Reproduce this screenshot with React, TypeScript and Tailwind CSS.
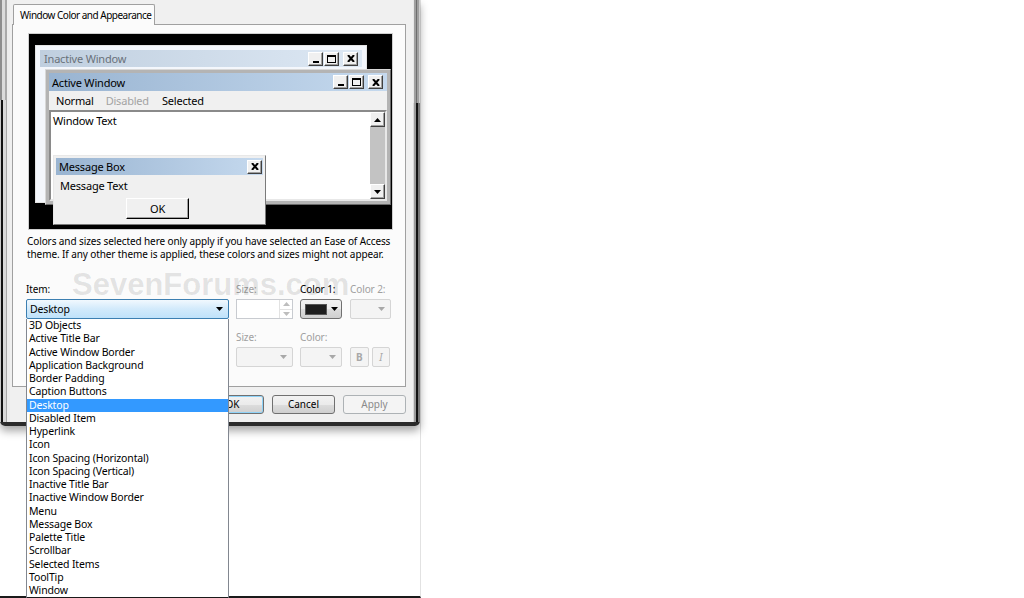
import React from "react";

const listItems = [
  "3D Objects",
  "Active Title Bar",
  "Active Window Border",
  "Application Background",
  "Border Padding",
  "Caption Buttons",
  "Desktop",
  "Disabled Item",
  "Hyperlink",
  "Icon",
  "Icon Spacing (Horizontal)",
  "Icon Spacing (Vertical)",
  "Inactive Title Bar",
  "Inactive Window Border",
  "Menu",
  "Message Box",
  "Palette Title",
  "Scrollbar",
  "Selected Items",
  "ToolTip",
  "Window",
];

const raised =
  "bg-[#f0f0f0] border border-t-white border-l-white border-r-[#404040] border-b-[#404040] shadow-[inset_-1px_-1px_#a0a0a0]";

const MinGlyph = () => (
  <svg width="8" height="8" viewBox="0 0 8 8">
    <rect x="1" y="6" width="6" height="2" fill="#000" />
  </svg>
);

const MaxGlyph = () => (
  <svg width="9" height="8" viewBox="0 0 9 8">
    <rect x="0.5" y="0.5" width="8" height="7" fill="none" stroke="#000" />
    <rect x="0" y="0" width="9" height="2" fill="#000" />
  </svg>
);

const CloseGlyph = () => (
  <svg width="8" height="7" viewBox="0 0 8 7">
    <path d="M1 0 L7 7 M7 0 L1 7" stroke="#000" strokeWidth="2" />
  </svg>
);

const CapBtn = ({ children }: { children: React.ReactNode }) => (
  <div className={`w-[15px] h-[14px] flex items-center justify-center ${raised}`}>
    {children}
  </div>
);

const ArrowDown = ({ color = "#000" }: { color?: string }) => (
  <svg width="7" height="4" viewBox="0 0 7 4">
    <polygon points="0,0 7,0 3.5,4" fill={color} />
  </svg>
);

const ArrowUp = ({ color = "#000" }: { color?: string }) => (
  <svg width="7" height="4" viewBox="0 0 7 4">
    <polygon points="0,4 7,4 3.5,0" fill={color} />
  </svg>
);

const Preview = () => (
  <div className="relative shrink-0 w-[363px] h-[195px] ml-[2px] bg-black outline outline-1 outline-[#cfcfcf] text-[11px] leading-[13px] tracking-[-0.2px]">
    {/* inactive window */}
    <div className="absolute left-[6px] top-[11px] w-[332px] h-[158px] bg-[#f4f7fc] border border-[#e4e4e4] p-[4px]">
      <div className="h-[17px] flex items-center justify-between pl-[4px] pr-[4px] bg-[linear-gradient(to_right,#c0cfdf,#dde8f4)] text-[#69717a]">
        <span>Inactive Window</span>
        <div className="flex items-center gap-[1px]">
          <CapBtn><MinGlyph /></CapBtn>
          <CapBtn><MaxGlyph /></CapBtn>
          <div className="w-[2px]" />
          <CapBtn><CloseGlyph /></CapBtn>
        </div>
      </div>
    </div>

    {/* active window */}
    <div className="absolute left-[16px] top-[35px] w-[346px] h-[136px] bg-[#b4b4b4] border border-t-[#d8d8d8] border-l-[#d8d8d8] border-r-[#6a6a6a] border-b-[#6a6a6a] p-[3px] flex flex-col">
      <div className="h-[18px] shrink-0 flex items-center justify-between pl-[3px] pr-[4px] bg-[linear-gradient(to_right,#99b4d1,#c5d9ee)] text-black">
        <span>Active Window</span>
        <div className="flex items-center gap-[1px]">
          <CapBtn><MinGlyph /></CapBtn>
          <CapBtn><MaxGlyph /></CapBtn>
          <div className="w-[2px]" />
          <CapBtn><CloseGlyph /></CapBtn>
        </div>
      </div>
      <div className="h-[19px] shrink-0 bg-[#f0f0f0] flex items-center pl-[7px] gap-[12px]">
        <span>Normal</span>
        <span className="text-[#a3a3a3]">Disabled</span>
        <span className="ml-[1px]">Selected</span>
      </div>
      <div className="flex-1 bg-white border-2 border-t-[#8a8a8a] border-l-[#8a8a8a] border-r-[#e8e8e8] border-b-[#e8e8e8] flex">
        <div className="flex-1 pl-[2px] pt-[2px]">Window Text</div>
        <div className="w-[15px] flex flex-col">
          <div className={`h-[15px] flex items-center justify-center ${raised}`}>
            <ArrowUp />
          </div>
          <div className="flex-1 bg-[#c3c3c3]" />
          <div className={`h-[15px] flex items-center justify-center ${raised}`}>
            <ArrowDown />
          </div>
        </div>
      </div>
    </div>

    {/* message box */}
    <div className="absolute left-[24px] top-[121px] w-[213px] h-[70px] bg-[#f0f0f0] border border-t-[#e8e8e8] border-l-[#e8e8e8] border-r-[#7a7a7a] border-b-[#7a7a7a] p-[2px] flex flex-col">
      <div className="h-[17px] shrink-0 flex items-center justify-between pl-[3px] pr-[1px] bg-[linear-gradient(to_right,#99b4d1,#c5d9ee)]">
        <span>Message Box</span>
        <CapBtn><CloseGlyph /></CapBtn>
      </div>
      <div className="pl-[4px] pt-[4px]">Message Text</div>
      <div className="flex justify-center mt-[6px] pr-[4px]">
        <div className={`w-[63px] h-[21px] flex items-center justify-center border-r-black border-b-black ${raised}`}>
          OK
        </div>
      </div>
    </div>
  </div>
);

const Win7Btn = ({
  children,
  className = "",
}: {
  children: React.ReactNode;
  className?: string;
}) => (
  <div
    className={`h-[19px] rounded-[3px] border border-[#707070] bg-[linear-gradient(to_bottom,#f2f2f2_0%,#ebebeb_50%,#dddddd_51%,#cfcfcf_100%)] flex items-center justify-center text-[10px] ${className}`}
  >
    {children}
  </div>
);

const DisabledCombo = ({ w }: { w: string }) => (
  <div className={`${w} h-[20px] rounded-[2px] border border-[#d5d5d5] bg-[#f4f4f4] flex items-center justify-end pr-[5px]`}>
    <ArrowDown color="#a8a8a8" />
  </div>
);

const Controls = () => (
  <div className="grid grid-cols-[203px_57px_42px_41px] gap-x-[7px] -ml-px mt-[22px] text-[10px] leading-[12px] tracking-[-0.1px]">
    <div>Item:</div>
    <div className="text-[#a0a0a0]">Size:</div>
    <div>Color 1:</div>
    <div className="text-[#a0a0a0] ml-px">Color 2:</div>

    <div className="relative mt-[4px]">
      <div className="h-[20px] border border-[#3c7fb1] rounded-[2px] bg-[linear-gradient(to_bottom,#f1f8fe,#d2eafb_50%,#bfe2fa)] flex items-center justify-between pl-[3px] pr-[5px] text-[10.5px] tracking-[-0.15px]">
        <span>Desktop</span>
        <ArrowDown />
      </div>
      <div className="absolute left-0 top-[20px] w-[203px] h-[280px] z-20 bg-white border-l border-r border-[#828790] border-b-2 border-b-[#1a1a1a]">
        {listItems.map((it) => (
          <div
            key={it}
            className={`h-[13.25px] leading-[13.25px] pl-[2px] text-[10.5px] tracking-[-0.15px] ${
              it === "Desktop" ? "bg-[#3399ff] text-white" : "text-black"
            }`}
          >
            {it}
          </div>
        ))}
      </div>
    </div>
    <div className="mt-[4px] h-[20px] border border-[#c8cbd0] bg-white flex justify-end">
      <div className="w-[13px] flex flex-col border-l border-[#e2e2e2]">
        <div className="flex-1 flex items-center justify-center border-b border-[#e2e2e2]">
          <ArrowUp color="#bdbdbd" />
        </div>
        <div className="flex-1 flex items-center justify-center">
          <ArrowDown color="#bdbdbd" />
        </div>
      </div>
    </div>
    <div className="mt-[4px]">
      <Win7Btn className="h-[20px] justify-start pl-[4px] gap-[4px]">
        <div className="w-[22px] h-[11px] bg-[#1e1e1e] border border-[#555]" />
        <ArrowDown />
      </Win7Btn>
    </div>
    <div className="mt-[4px] ml-px">
      <DisabledCombo w="w-[41px]" />
    </div>

    <div className="mt-[12px]" />
    <div className="mt-[12px] text-[#a0a0a0]">Size:</div>
    <div className="mt-[12px] text-[#a0a0a0]">Color:</div>
    <div className="mt-[12px]" />

    <div className="mt-[4px]" />
    <div className="mt-[4px]">
      <DisabledCombo w="w-[57px]" />
    </div>
    <div className="mt-[4px]">
      <DisabledCombo w="w-[42px]" />
    </div>
    <div className="mt-[4px] ml-px flex gap-[3px]">
      <div className="w-[19px] h-[20px] rounded-[2px] border border-[#d5d5d5] bg-[#f4f4f4] flex items-center justify-center font-bold text-[#a8a8a8]">
        B
      </div>
      <div className="w-[19px] h-[20px] rounded-[2px] border border-[#d5d5d5] bg-[#f4f4f4] flex items-center justify-center italic text-[#a8a8a8]">
        I
      </div>
    </div>
  </div>
);

const Dialog = () => (
  <div className="w-[420px] rounded-b-[5px] border-b-[4px] border-b-[#2b2b2b] shadow-[0_5px_8px_rgba(0,0,0,0.35)] flex">
    {/* left frame */}
    <div className="w-[10px] flex flex-col">
      <div className="h-[100px] bg-[linear-gradient(to_right,#8c8c8c_0_2px,#dadada_2px_5px,#a8a8a8_5px_7px,#ececec_7px_10px)]" />
      <div className="flex-1 bg-[linear-gradient(to_right,#c8c8c8_0_1px,#111_1px_3px,#d8d8d8_3px_6px,#a8a8a8_6px_7px,#ececec_7px_10px)]" />
    </div>

    {/* body */}
    <div className="w-[403px] h-[422px] bg-[#f0f0f0] pl-[2px] pr-[7px] flex flex-col">
      <div className="h-[24px] shrink-0 pt-[4px]">
        <div className="relative z-10 ml-px w-[142px] h-[21px] border border-b-0 border-[#a0a0a0] rounded-t-[2px] bg-[#fbfbfb] flex items-center pl-[6px] text-[10px] tracking-[-0.5px] whitespace-nowrap">
          Window Color and Appearance
        </div>
      </div>
      <div className="relative shrink-0 h-[363px] border border-[#a0a0a0] bg-[#fbfbfb] pt-[9px] pl-[14px] flex flex-col">
        <Preview />
        <p className="mt-[6px] text-[10px] leading-[13px] tracking-[-0.1px] text-black whitespace-nowrap">
          Colors and sizes selected here only apply if you have selected an Ease of Access
          <br />
          theme. If any other theme is applied, these colors and sizes might not appear.
        </p>
        <Controls />
        <div className="absolute left-[59px] top-[244px] z-30 pointer-events-none font-['Liberation_Sans',sans-serif] font-bold text-[31px] leading-[31px] text-black/10">
          SevenForums.com
        </div>
      </div>
      <div className="flex justify-end gap-[8px] mt-[8px]">
        <Win7Btn className="w-[63px] border-[#3c7fb1] shadow-[inset_0_0_0_1px_#8fd3f8]">OK</Win7Btn>
        <Win7Btn className="w-[63px]">Cancel</Win7Btn>
        <div className="w-[63px] h-[19px] rounded-[3px] border border-[#adb2b5] bg-[#f4f4f4] flex items-center justify-center text-[10px] text-[#8a8a8a]">
          Apply
        </div>
      </div>
    </div>

    {/* right frame */}
    <div className="w-[7px] flex flex-col">
      <div className="h-[103px] bg-[linear-gradient(to_right,#e8e8e8_0_1px,#a0a0a0_1px_3px,#6e6e6e_3px_4px,#a0a0a0_4px_6px,#d0d0d0_6px_7px)]" />
      <div className="flex-1 bg-[linear-gradient(to_right,#d8d8d8_0_1px,#9a9a9a_1px_3px,#111_3px_5px,#777_5px_7px)]" />
    </div>
  </div>
);

export default function App() {
  return (
    <div className="w-[1024px] h-[598px] bg-white overflow-hidden font-['Noto_Sans',sans-serif] text-black">
      <div className="w-[421px] h-[598px] border-r border-r-[#e2e2e2] border-b-2 border-b-[#1a1a1a]">
        <Dialog />
      </div>
    </div>
  );
}
